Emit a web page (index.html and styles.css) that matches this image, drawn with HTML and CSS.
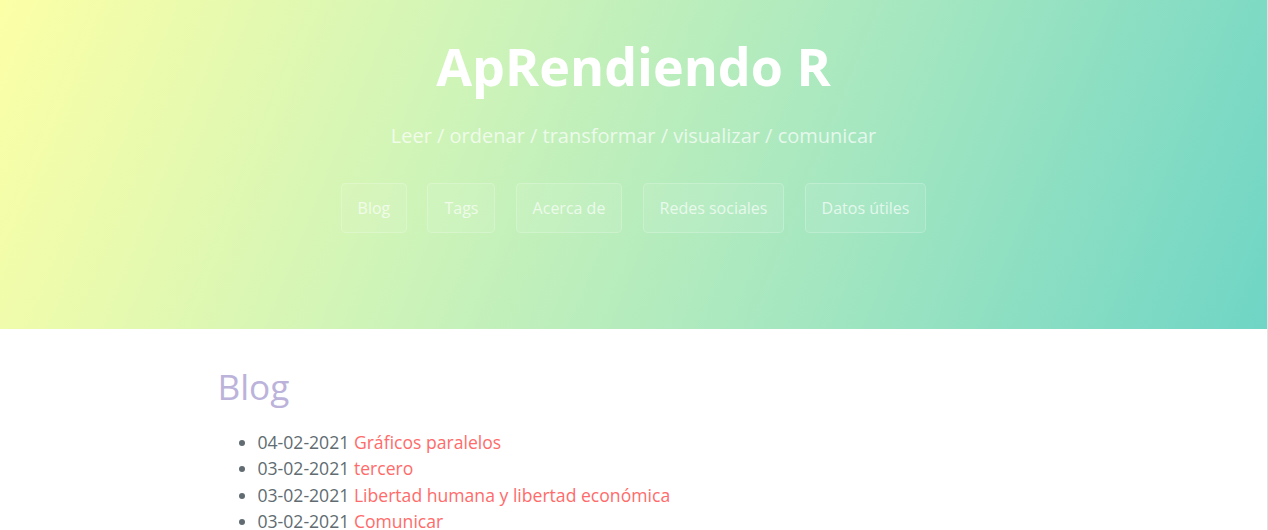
FILE: index.html
```html
<!DOCTYPE html>
<html lang="es">
<head>
<meta charset="utf-8">
<title>ApRendiendo R</title>
<link rel="stylesheet" href="styles.css">
</head>
<body>
<section class="page-header">
  <h1 class="project-name">ApRendiendo R</h1>
  <h2 class="project-tagline">Leer / ordenar / transformar / visualizar / comunicar</h2>
  <nav class="nav">
    <a class="btn" href="#">Blog</a>
    <a class="btn" href="#">Tags</a>
    <a class="btn" href="#">Acerca de</a>
    <a class="btn" href="#">Redes sociales</a>
    <a class="btn" href="#">Datos útiles</a>
  </nav>
</section>
<section class="main-content">
  <h1 class="section-title">Blog</h1>
  <ul class="posts">
    <li>04-02-2021 <a href="#">Gráficos paralelos</a></li>
    <li>03-02-2021 <a href="#">tercero</a></li>
    <li>03-02-2021 <a href="#">Libertad humana y libertad económica</a></li>
    <li>03-02-2021 <a href="#">Comunicar</a></li>
  </ul>
</section>
</body>
</html>
```
FILE: styles.css
```css
html, body {
  margin: 0;
  padding: 0;
}
body {
  font-family: "Open Sans", "Helvetica Neue", Helvetica, Arial, sans-serif;
  font-size: 16px;
  line-height: 1.5;
  color: #606c71;
  background: #fff;
  border-right: 1px solid #e2e2e2;
}
a {
  text-decoration: none;
}
.page-header {
  color: #fff;
  text-align: center;
  background-color: #b5ecbc;
  background-image: linear-gradient(112deg, #fcffa6 0%, #cff4b8 35%, #a6e7c0 65%, #6fd5c5 100%);
  padding: 27px 96px 80px;
}
.project-name {
  font-size: 52px;
  font-weight: 700;
  line-height: 1.5;
  margin: 0 0 1.6px;
}
.project-tagline {
  font-size: 20px;
  font-weight: 400;
  line-height: 1.5;
  opacity: 0.7;
  margin: 16px 0 32px;
}
.btn {
  display: inline-block;
  margin-bottom: 16px;
  color: rgba(255, 255, 255, 0.7);
  background-color: rgba(255, 255, 255, 0.08);
  border: 1px solid rgba(255, 255, 255, 0.2);
  border-radius: 4.8px;
  padding: 12px 16px;
  line-height: 24px;
  font-size: 16px;
}
.btn + .btn {
  margin-left: 16px;
}
.main-content {
  max-width: 1024px;
  margin: 0 auto;
  padding: 31px 96px;
  box-sizing: border-box;
  font-size: 17.6px;
  line-height: 1.5;
}
.section-title {
  font-size: 35.2px;
  font-weight: 400;
  color: #bcb3db;
  margin: 0 0 16px;
  line-height: 1.5;
}
.posts {
  margin: 0;
  padding-left: 40px;
}
.posts a {
  color: #ff6b6a;
}
```
